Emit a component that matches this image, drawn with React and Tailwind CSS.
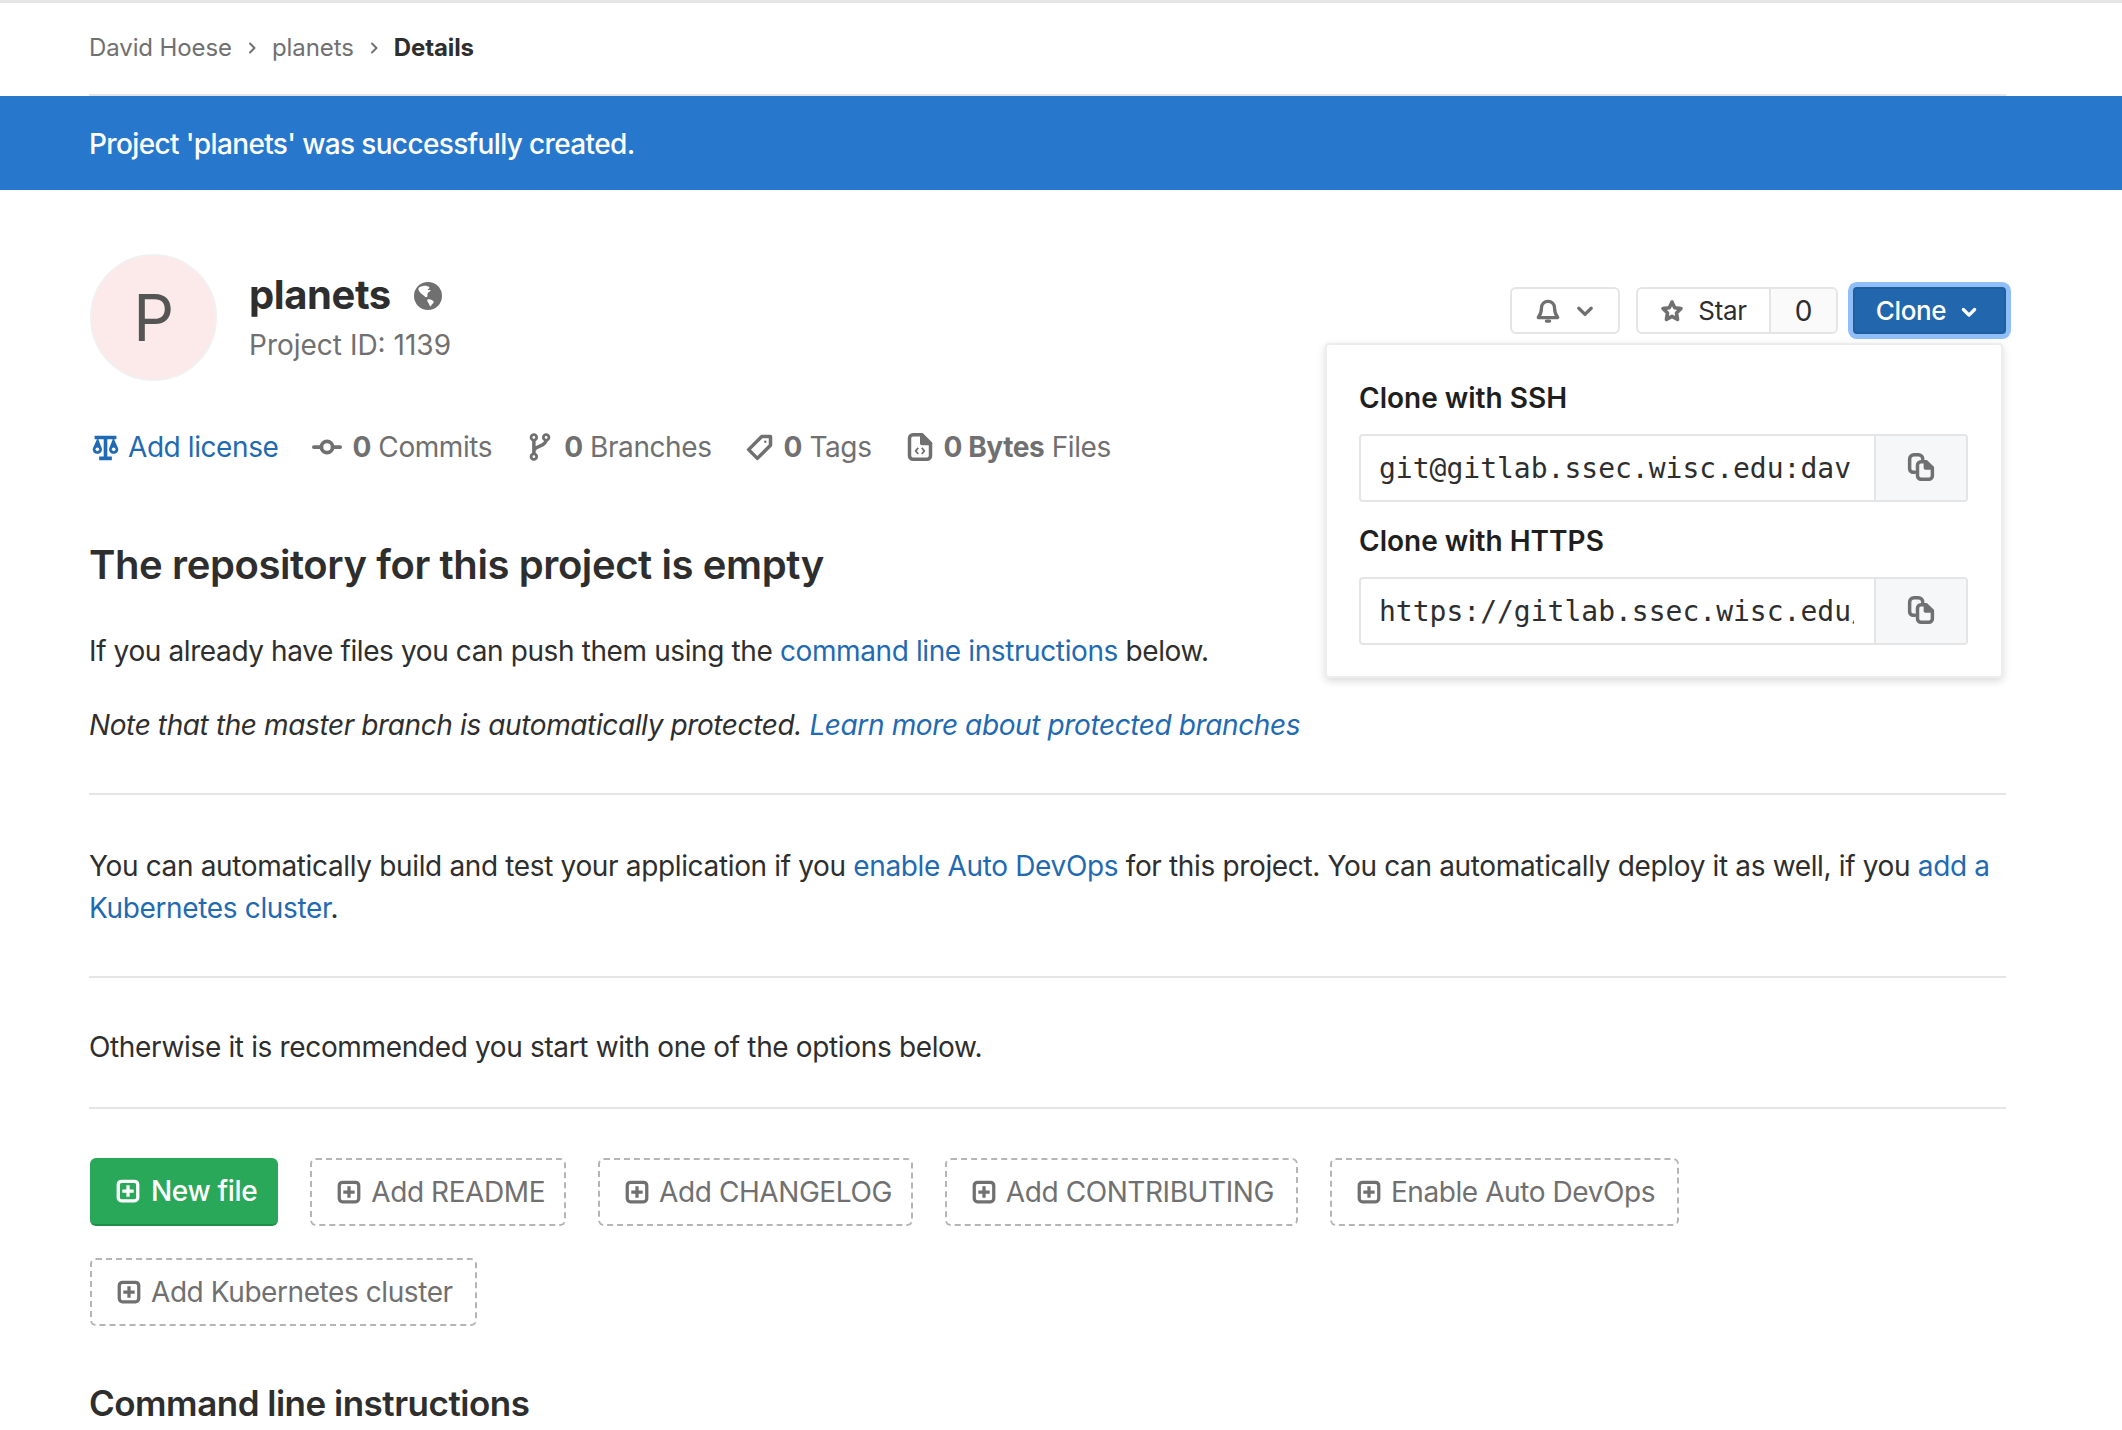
import React from 'react';

const Plus = ({ className }) => (
  <svg viewBox="0 0 16 16" className={className} fill="currentColor">
    <path fillRule="evenodd" d="M4 1h8a3 3 0 0 1 3 3v8a3 3 0 0 1-3 3H4a3 3 0 0 1-3-3V4a3 3 0 0 1 3-3zm0 2a1 1 0 0 0-1 1v8a1 1 0 0 0 1 1h8a1 1 0 0 0 1-1V4a1 1 0 0 0-1-1H4zm3 1.500h2V7h2.500v2H9v2.500H7V9H4.500V7H7V4.500z" />
  </svg>
);

const Chevron = ({ className, width = 2 }) => (
  <svg viewBox="0 0 16 16" className={className} fill="none" stroke="currentColor" strokeWidth={width} strokeLinecap="round" strokeLinejoin="round">
    <path d="M3.500 6l4.500 4.500L12.500 6" />
  </svg>
);

const Copy = () => (
  <svg viewBox="0 0 16 16" className="w-[28px] h-[28px] text-[#707070]" fill="none" stroke="currentColor" strokeWidth="2" strokeLinejoin="round" strokeLinecap="round">
    <path d="M4.500 11H3.500A2 2 0 0 1 1.500 9V3.500a2.500 2.500 0 0 1 2.500-2.500h2.500a2.500 2.500 0 0 1 2.500 2.500" />
    <path d="M6 7a2 2 0 0 1 2-2h3l3.500 3.500V13a2 2 0 0 1-2 2H8a2 2 0 0 1-2-2z" />
    <path d="M10.500 5v3.500h4l-4-3.500z" fill="currentColor" />
  </svg>
);

const Stat = ({ icon, count, label, boldLabel }) => (
  <div className="flex items-center gap-[10px] text-[#707070]">
    {icon}
    <span>
      <span className="font-bold">{count}</span>
      {boldLabel && <span className="font-bold"> {boldLabel}</span>} {label}
    </span>
  </div>
);

const Template = ({ label, wide }) => (
  <div className={`h-[68px] pl-[24px] ${wide ? 'pr-[22px]' : 'pr-[19px]'} flex items-center gap-[9px] border-2 border-dashed border-[#b5b5b5] rounded-[6px] text-[#707070] tracking-[-0.42px]`}>
    <Plus className="w-[26px] h-[26px]" />
    {label}
  </div>
);

const CloneField = ({ value }) => (
  <div className="flex h-[68px] border-2 border-[#e5e5e5] rounded-[4px] overflow-hidden">
    <div className="w-[513px] pl-[18px] pr-[20px] pt-[2px] flex items-center overflow-hidden whitespace-nowrap font-['DejaVu_Sans_Mono','Liberation_Mono',monospace] text-[#2e2e2e] tracking-normal">
      <span className="block w-full overflow-hidden">{value}</span>
    </div>
    <div className="flex-1 bg-[#f6f7f9] border-l-2 border-[#e5e5e5] flex items-center justify-center pb-[2px]">
      <Copy />
    </div>
  </div>
);

export default function App() {
  return (
    <div className="h-[1430px] overflow-hidden bg-white border-t-[3px] border-[#e5e5e5] font-['Inter',sans-serif] text-[28px] leading-[42px] tracking-[-0.35px] text-[#2e2e2e]">
      <div className="pl-[89px] pr-[116px]">
        <div className="h-[93px] flex items-center gap-[12px] border-b-2 border-[#e5e5e5] text-[24px] tracking-[-0.1px] text-[#707070] pb-[2px]">
          <span>David Hoese</span>
          <Chevron className="w-[16px] h-[16px] -rotate-90" />
          <span>planets</span>
          <Chevron className="w-[16px] h-[16px] -rotate-90" />
          <span className="font-bold text-[#2e2e2e]">Details</span>
        </div>
      </div>

      <div className="h-[94px] bg-[#2778cd] pl-[89px] pt-[2px] flex items-center text-white font-medium tracking-[-0.64px]">
        Project 'planets' was successfully created.
      </div>

      <div className="relative pl-[89px] pr-[116px]">
        <div className="flex pt-[64px] h-[239px]">
          <div className="ml-[1px] w-[127px] h-[127px] rounded-full bg-[#fbeae9] border-2 border-[#f2f0f0] flex items-center justify-center text-[64px] text-[#555]">P</div>
          <div className="ml-[32px] pt-[16px]">
            <div className="flex items-center gap-[23px]">
              <span className="font-bold text-[40px] leading-[50px] tracking-[-0.42px] text-[#2e2e2e]">planets</span>
              <svg viewBox="0 0 16 16" className="w-[28px] h-[28px] mt-[2px]">
                <circle cx="8" cy="8" r="8" fill="#707070" />
                <path fill="#fff" d="M2.800 3.300c1.200-.9 2.800-1.200 4.300-1.100.4.500 1.600.3 1.700.9.100.6-.8.700-1 1.300.5.500 1.300-.2 1.800.3-.4.800-1.300.9-1.700 1.600-.5.800.2 1.800-.5 2.300-.6.300-1.300-.3-1.700-.7C4.500 6.800 3.200 6 2.600 4.500c-.2-.4-.1-.8.2-1.200z" />
                <path fill="#fff" d="M7.800 10c.9-.3 1.900.2 2.800.5.700.2.800 1 .4 1.500-.4.600-1 .9-1.200 1.500-.3.500-.9.300-1-.2-.2-.9-.9-1.500-1.200-2.400-.1-.3-.1-.7.200-.9z" />
              </svg>
            </div>
            <div className="text-[#707070] mt-[4px] tracking-normal">Project ID: 1139</div>
          </div>
        </div>

        <div className="absolute right-[116px] top-[97px] flex items-stretch h-[47px] text-[#2e2e2e]">
          <div className="w-[110px] border-2 border-[#e5e5e5] rounded-[6px] flex items-center justify-center gap-[13px] text-[#707070]">
            <svg viewBox="0 0 16 16" className="w-[26px] h-[26px]" fill="none" stroke="currentColor" strokeWidth="2" strokeLinejoin="round" strokeLinecap="round">
              <path d="M8 2a4 4 0 0 1 4 4c0 3 .8 4.500 2 6H2c1.200-1.500 2-3 2-6a4 4 0 0 1 4-4z" />
              <path d="M7 14.200h2" />
            </svg>
            <Chevron className="w-[22px] h-[22px]" width={2.4} />
          </div>
          <div className="ml-[16px] w-[202px] flex border-2 border-[#e5e5e5] rounded-[6px] overflow-hidden">
            <div className="w-[131px] flex items-center justify-center gap-[14px]">
              <svg viewBox="0 0 16 16" className="w-[24px] h-[24px] text-[#707070]" fill="none" stroke="currentColor" strokeWidth="2.400" strokeLinejoin="round">
                <path d="M8 2l1.800 3.800 4.200.6-3 3 .7 4.200L8 11.600l-3.700 2 .7-4.200-3-3 4.200-.6z" />
              </svg>
              <span className="text-[26px]">Star</span>
            </div>
            <div className="flex-1 border-l-2 border-[#e5e5e5] bg-[#fafafa] flex items-center justify-center">0</div>
          </div>
          <div className="ml-[15px] w-[153px] bg-[#2267ae] rounded-[4px] border-2 border-[#1f5f9f] ring-[5px] ring-[#8fbef8] text-white flex items-center justify-center gap-[13px] pr-[4px]">
            <span className="text-[26px] font-medium">Clone</span>
            <Chevron className="w-[20px] h-[20px] mt-[3px]" width={2.6} />
          </div>
        </div>

        <div className="absolute left-[1325px] top-[153px] w-[678px] h-[335px] bg-white border-2 border-[#ededed] rounded-[4px] shadow-[0_3px_8px_rgba(0,0,0,0.15)] pl-[32px] pr-[33px] pt-[32px] z-10">
          <div className="font-semibold tracking-normal text-[#1f1f1f] mb-[15px]">Clone with SSH</div>
          <CloneField value="git@gitlab.ssec.wisc.edu:dav" />
          <div className="font-semibold tracking-normal text-[#1f1f1f] mt-[18px] mb-[15px]">Clone with HTTPS</div>
          <CloneField value="https://gitlab.ssec.wisc.edu/" />
        </div>

        <div className="flex items-center h-[38px] gap-[34px] mt-[-1px] tracking-[-0.42px]">
          <div className="ml-[2px] flex items-center gap-[8px] text-[#1f6ab2]">
            <svg viewBox="0 0 16 16" className="w-[29px] h-[29px]" fill="currentColor">
              <path d="M2 1.500h12v2h-1.300L15 8.500c.2 1.800-1 3-2.500 3S9.800 10.300 10 8.500l2-5H9V13h2.500v2h-7v-2H7V3.500H4l2 5c.2 1.800-1 3-2.500 3S.8 10.300 1 8.500l2.300-5H2z" />
              <circle cx="3.500" cy="9" r="1" fill="#fff" />
              <circle cx="12.500" cy="9" r="1" fill="#fff" />
            </svg>
            <span>Add license</span>
          </div>
          <Stat
            count="0"
            label="Commits"
            icon={
              <svg viewBox="0 0 16 16" className="w-[30px] h-[30px]" fill="none" stroke="currentColor" strokeWidth="2" strokeLinecap="round">
                <circle cx="8" cy="8" r="3" />
                <path d="M1 8h4M11 8h4" />
              </svg>
            }
          />
          <Stat
            count="0"
            label="Branches"
            icon={
              <svg viewBox="0 0 16 16" className="w-[28px] h-[28px]" fill="none" stroke="currentColor" strokeWidth="1.600">
                <circle cx="4.500" cy="2.500" r="1.600" />
                <circle cx="11.500" cy="2.500" r="1.600" />
                <circle cx="4.500" cy="13.500" r="1.600" />
                <path d="M4.500 4v8M11.500 4c0 4-7 3-7 6.500" strokeWidth="2" />
              </svg>
            }
          />
          <Stat
            count="0"
            label="Tags"
            icon={
              <svg viewBox="0 0 16 16" className="w-[28px] h-[28px]" fill="none" stroke="currentColor" strokeWidth="2" strokeLinejoin="round">
                <path d="M9 2h5v5l-7.500 7.500L1.500 9.500z" />
                <circle cx="11" cy="5" r=".7" fill="currentColor" stroke="none" />
              </svg>
            }
          />
          <Stat
            count="0"
            boldLabel="Bytes"
            label="Files"
            icon={
              <svg viewBox="0 0 16 16" className="w-[28px] h-[28px]" fill="none" stroke="currentColor" strokeWidth="2" strokeLinejoin="round">
                <path d="M2 3a2 2 0 0 1 2-2h5l5 5v7a2 2 0 0 1-2 2H4a2 2 0 0 1-2-2z" />
                <path d="M9 1v5h5z" fill="currentColor" />
                <path d="M7 8.500L5.500 10.200 7 12M9 8.500l1.500 1.700L9 12" strokeWidth="1" />
              </svg>
            }
          />
        </div>

        <h2 className="mt-[74px] font-semibold text-[40px] leading-[50px] tracking-[-0.4px] text-[#2e2e2e]">The repository for this project is empty</h2>
        <p className="mt-[40px] tracking-[-0.39px]">
          If you already have files you can push them using the <a className="text-[#1f6ab2]">command line instructions</a> below.
        </p>
        <p className="mt-[32px] italic tracking-[-0.39px]">
          Note that the master branch is automatically protected. <a className="text-[#1f6ab2]">Learn more about protected branches</a>
        </p>
        <div className="mt-[47px] border-t-2 border-[#e5e5e5]" />
        <p className="mt-[50px]">
          You can automatically build and test your application if you <a className="text-[#1f6ab2]">enable Auto DevOps</a> for this project. You can automatically deploy it as well, if you <a className="text-[#1f6ab2]">add a Kubernetes cluster</a>.
        </p>
        <div className="mt-[47px] border-t-2 border-[#e5e5e5]" />
        <p className="mt-[48px]">Otherwise it is recommended you start with one of the options below.</p>
        <div className="mt-[39px] border-t-2 border-[#e5e5e5]" />

        <div className="mt-[49px] pl-[1px] flex flex-wrap gap-[32px]">
          <div className="h-[68px] pl-[25px] pr-[21px] flex items-center gap-[10px] bg-[#2aa85a] border-b-2 border-[#1f8f4a] rounded-[6px] text-white font-medium">
            <Plus className="w-[26px] h-[26px]" />
            New file
          </div>
          <Template label="Add README" />
          <Template label="Add CHANGELOG" />
          <Template label="Add CONTRIBUTING" wide />
          <Template label="Enable Auto DevOps" wide />
          <Template label="Add Kubernetes cluster" wide />
        </div>

        <h3 className="mt-[52px] font-semibold text-[35px] leading-[50px] tracking-[-0.5px] text-[#2e2e2e]">Command line instructions</h3>
      </div>
    </div>
  );
}
